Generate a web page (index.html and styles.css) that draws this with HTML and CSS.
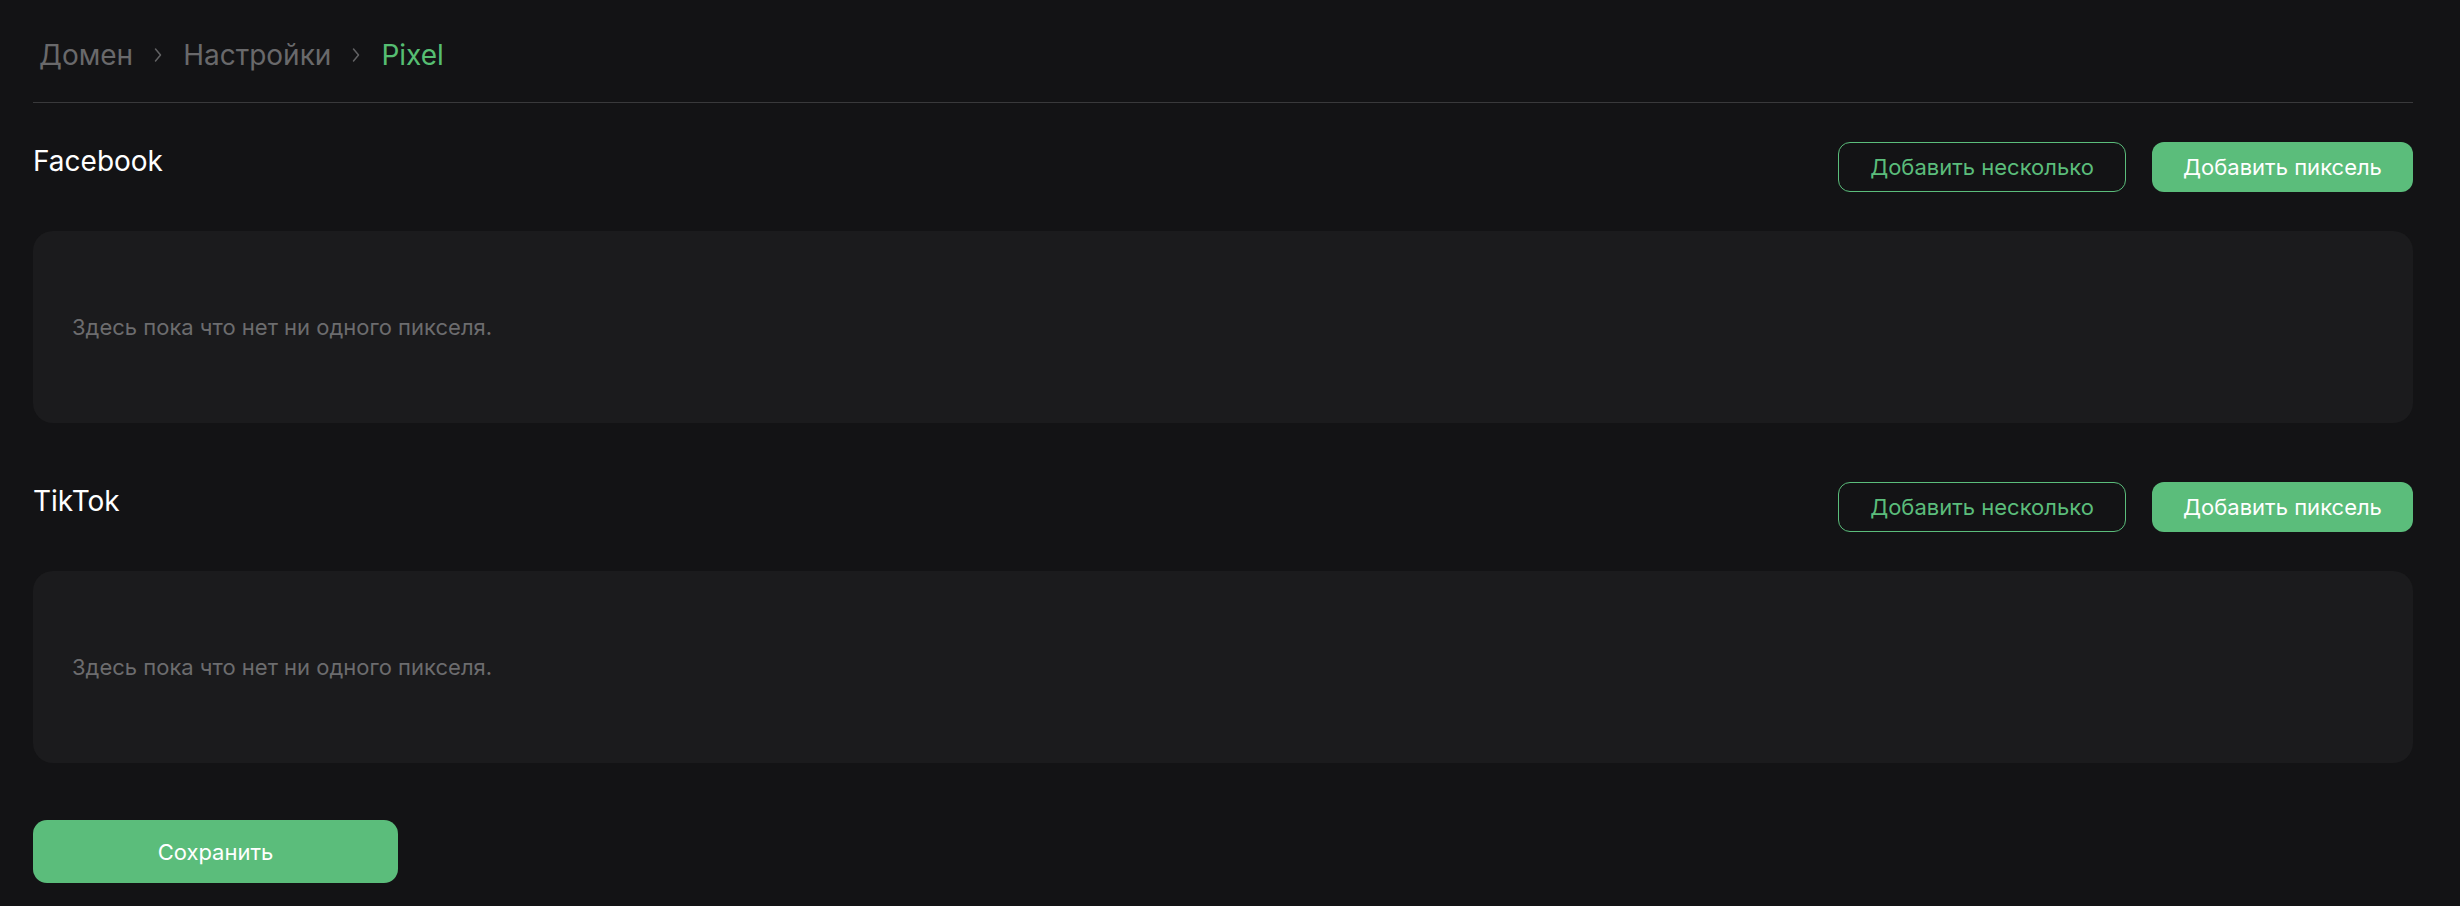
FILE: index.html
```html
<!DOCTYPE html>
<html lang="ru">
<head>
<meta charset="utf-8">
<title>Pixel</title>
<link rel="stylesheet" href="styles.css">
</head>
<body>
<div class="page">
  <nav class="crumbs">
    <span class="crumb">Домен</span>
    <svg class="chev" width="8" height="16" viewBox="0 0 8 16"><polyline points="1.5,2 6.5,8 1.5,14" fill="none" stroke="#626264" stroke-width="1.5" stroke-linecap="round" stroke-linejoin="round"/></svg>
    <span class="crumb">Настройки</span>
    <svg class="chev" width="8" height="16" viewBox="0 0 8 16"><polyline points="1.5,2 6.5,8 1.5,14" fill="none" stroke="#626264" stroke-width="1.5" stroke-linecap="round" stroke-linejoin="round"/></svg>
    <span class="crumb crumb-active">Pixel</span>
  </nav>

  <section class="section">
    <div class="section-head">
      <h2 class="section-title">Facebook</h2>
      <div class="actions">
        <button class="btn btn-outline">Добавить несколько</button>
        <button class="btn btn-fill">Добавить пиксель</button>
      </div>
    </div>
    <div class="empty">Здесь пока что нет ни одного пикселя.</div>
  </section>

  <section class="section">
    <div class="section-head">
      <h2 class="section-title">TikTok</h2>
      <div class="actions">
        <button class="btn btn-outline">Добавить несколько</button>
        <button class="btn btn-fill">Добавить пиксель</button>
      </div>
    </div>
    <div class="empty">Здесь пока что нет ни одного пикселя.</div>
  </section>

  <button class="btn-save">Сохранить</button>
</div>
</body>
</html>
```

FILE: styles.css
```css
html, body {
  margin: 0;
  padding: 0;
  background: #131315;
  height: 100%;
}
body {
  font-family: Inter, "Noto Sans", sans-serif;
  color: #ffffff;
}
.page {
  padding: 0 47px 0 33px;
}
.crumbs {
  display: flex;
  align-items: center;
  gap: 21px;
  padding: 38px 0 30px 6px;
  border-bottom: 1px solid #39393b;
}
.crumb {
  font-size: 28px;
  line-height: 34px;
  color: #69696b;
}
.crumb-active {
  color: #56be72;
}
.chev {
  display: block;
}
.section {
  margin-top: 39px;
}
.section + .section {
  margin-top: 59px;
}
.section-head {
  display: flex;
  justify-content: space-between;
  align-items: flex-start;
}
.section-title {
  margin: 2px 0 0;
  font-size: 28px;
  line-height: 34px;
  font-weight: 400;
  color: #ffffff;
}
.actions {
  display: flex;
  gap: 26px;
}
.btn {
  height: 50px;
  border-radius: 12px;
  font-family: Inter, "Noto Sans", sans-serif;
  font-size: 22px;
  padding: 0;
  cursor: pointer;
  box-sizing: border-box;
}
.btn-outline {
  background: transparent;
  border: 1.5px solid #5bbd7b;
  color: #5bbd7b;
  width: 288px;
}
.btn-fill {
  background: #5bbd7b;
  border: none;
  color: #ffffff;
  width: 261px;
}
.empty {
  margin-top: 39px;
  height: 192px;
  box-sizing: border-box;
  background: #1b1b1d;
  border-radius: 20px;
  display: flex;
  align-items: center;
  padding-left: 39px;
  font-size: 22px;
  color: #6c6c6e;
}
.btn-save {
  display: block;
  margin-top: 57px;
  width: 365px;
  height: 63px;
  border: none;
  border-radius: 14px;
  background: #5bbd7b;
  color: #ffffff;
  font-family: Inter, "Noto Sans", sans-serif;
  font-size: 22px;
  cursor: pointer;
}
```
